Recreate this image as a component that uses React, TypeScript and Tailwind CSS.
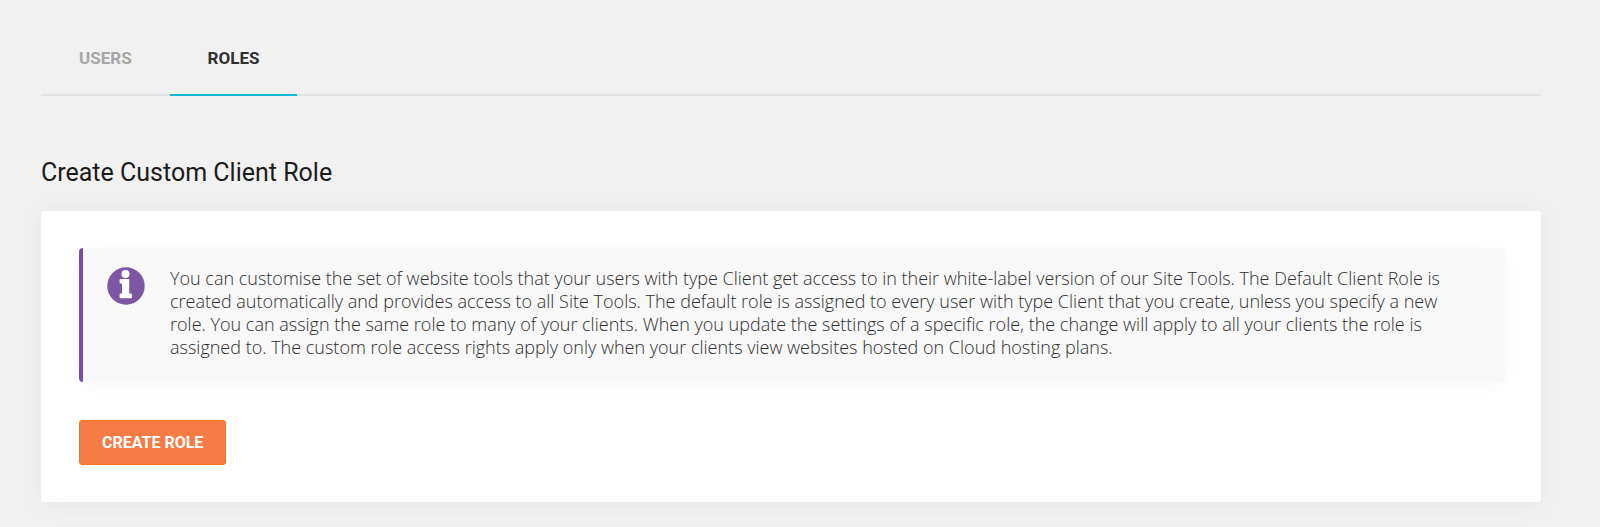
import { useState } from "react";

const tabs = ["USERS", "ROLES"];

function InfoIcon() {
  return (
    <svg viewBox="0 0 38 38" className="size-[38px] shrink-0" aria-hidden="true">
      <circle cx="19" cy="19" r="18.7" fill="#7e57a4" />
      <circle cx="18.5" cy="7.1" r="4" fill="#fff" />
      <path
        d="M13.4 12h8q.8 0 .8.8v13.6h1.9q.8 0 .8.8v3.2q0 .8-.8.8H13.4q-.8 0-.8-.8v-3.2q0-.8.8-.8H15V16.6h-1.6q-.8 0-.8-.8v-3q0-.8.8-.8z"
        fill="#fff"
      />
    </svg>
  );
}

export default function App() {
  const [active, setActive] = useState("ROLES");

  return (
    <main className="min-h-screen bg-[#f1f1f1] pt-[21px] pr-[59px] pb-[26px] pl-[41px] font-['Roboto',sans-serif]">
      <div role="tablist" aria-label="Client management" className="flex border-b-2 border-[#e3e3e3]">
        {tabs.map((tab) => (
          <button
            key={tab}
            type="button"
            role="tab"
            aria-selected={active === tab}
            onClick={() => setActive(tab)}
            className={
              active === tab
                ? "-mb-0.5 h-[75px] cursor-pointer border-b-2 border-[#0bb9d6] px-[38px] pt-0.5 text-[17px] font-bold text-[#303030]"
                : "-mb-0.5 h-[75px] cursor-pointer border-b-2 border-transparent px-[38px] pt-0.5 text-[17px] font-bold text-[#a6a6a6]"
            }
          >
            {tab}
          </button>
        ))}
      </div>

      <h1 className="mt-[61px] text-[25px] leading-8 text-[#1b1b1b]">Create Custom Client Role</h1>

      <section className="mt-[22px] rounded-[3px] bg-white pt-[37px] pr-[36px] pb-[37px] pl-[38px] shadow-[0_2px_24px_rgba(0,0,0,0.05)]">
        <div className="flex gap-[25px] rounded-[4px] border-l-4 border-[#7950a0] bg-[#f8f8f8] pt-[19px] pr-[50px] pb-[23px] pl-6 shadow-[0_2px_24px_rgba(0,0,0,0.04)]">
          <InfoIcon />
          <p className="font-['Open_Sans',sans-serif] text-[18px] leading-[23px] font-light text-[#2e2e2e]">
            You can customise the set of website tools that your users with type Client get access to in their
            white-label version of our Site Tools. The Default Client Role is created automatically and provides access
            to all Site Tools. The default role is assigned to every user with type Client that you create, unless you
            specify a new role. You can assign the same role to many of your clients. When you update the settings of a
            specific role, the change will apply to all your clients the role is assigned to. The custom role access
            rights apply only when your clients view websites hosted on Cloud hosting plans.
          </p>
        </div>

        <button
          type="button"
          className="mt-[38px] block h-[45px] cursor-pointer rounded-[3px] border border-[#f26f2c] bg-[#f57c45] px-[22px] text-[16px] font-bold text-white"
        >
          CREATE ROLE
        </button>
      </section>
    </main>
  );
}
